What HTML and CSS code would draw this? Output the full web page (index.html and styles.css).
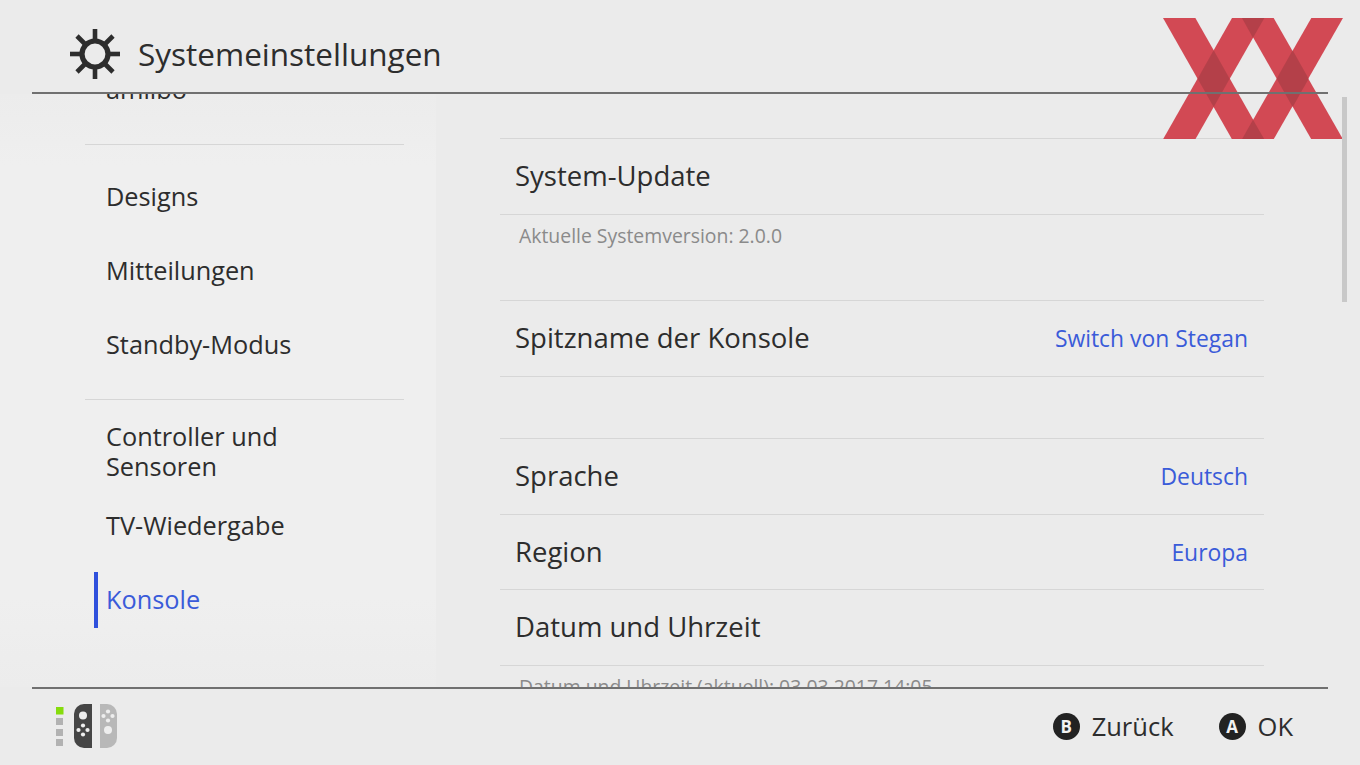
FILE: index.html
```html
<!DOCTYPE html>
<html lang="de">
<head>
    <meta charset="UTF-8">
    <title>Systemeinstellungen</title>
    <link rel="stylesheet" href="styles.css">
</head>
<body>
    <div class="app">
        <header class="top-bar">
            <svg class="gear" viewBox="0 0 50 50" width="50" height="50">
                <circle cx="25" cy="25" r="13" fill="none" stroke="#2d2d2d" stroke-width="5.200"/>
                <g stroke="#2d2d2d" stroke-width="4.600">
                    <line x1="25" y1="0" x2="25" y2="12"/>
                    <line x1="25" y1="38" x2="25" y2="50"/>
                    <line x1="0" y1="25" x2="12" y2="25"/>
                    <line x1="38" y1="25" x2="50" y2="25"/>
                    <line x1="7" y1="7" x2="16" y2="16"/>
                    <line x1="34" y1="34" x2="43" y2="43"/>
                    <line x1="43" y1="7" x2="34" y2="16"/>
                    <line x1="16" y1="34" x2="7" y2="43"/>
                </g>
            </svg>
            <h1>Systemeinstellungen</h1>
        </header>

        <main class="content">
            <nav class="sidebar">
                <ul class="nav-group nav-first">
                    <li>amiibo</li>
                </ul>
                <ul class="nav-group">
                    <li>Designs</li>
                    <li>Mitteilungen</li>
                    <li>Standby-Modus</li>
                </ul>
                <ul class="nav-group">
                    <li>Controller und<br>Sensoren</li>
                    <li>TV-Wiedergabe</li>
                    <li class="active">Konsole</li>
                </ul>
            </nav>

            <section class="settings">
                <div class="setting-group">
                    <div class="row"><span>System-Update</span></div>
                    <p class="note">Aktuelle Systemversion: 2.0.0</p>
                </div>
                <div class="setting-group">
                    <div class="row"><span>Spitzname der Konsole</span><span class="value">Switch von Stegan</span></div>
                </div>
                <div class="setting-group spaced">
                    <div class="row"><span>Sprache</span><span class="value">Deutsch</span></div>
                    <div class="row short"><span>Region</span><span class="value">Europa</span></div>
                    <div class="row"><span>Datum und Uhrzeit</span></div>
                    <p class="note">Datum und Uhrzeit (aktuell): 03.03.2017 14:05</p>
                </div>
            </section>
        </main>

        <footer class="bottom-bar">
            <svg class="joycons" viewBox="0 0 62 44" width="62" height="44">
                <rect x="0" y="3" width="7.500" height="7.500" fill="#86dc0c"/>
                <rect x="0" y="14" width="7" height="7" fill="#b2b2b2"/>
                <rect x="0" y="25" width="7" height="7" fill="#b2b2b2"/>
                <rect x="0" y="35" width="7" height="7" fill="#b2b2b2"/>
                <path d="M36 0H28A10 10 0 0 0 18 10V34A10 10 0 0 0 28 44H36Z" fill="#454545"/>
                <circle cx="27" cy="11.500" r="4" fill="#eee"/>
                <g fill="#eee">
                    <circle cx="27" cy="21.500" r="2.100"/>
                    <circle cx="27" cy="30.500" r="2.100"/>
                    <circle cx="22.500" cy="26" r="2.100"/>
                    <circle cx="31.500" cy="26" r="2.100"/>
                </g>
                <path d="M44 0H51A10 10 0 0 1 61 10V34A10 10 0 0 1 51 44H44Z" fill="#b8b8b8"/>
                <g fill="#eee">
                    <circle cx="52" cy="7.500" r="2.100"/>
                    <circle cx="52" cy="16.500" r="2.100"/>
                    <circle cx="47.500" cy="12" r="2.100"/>
                    <circle cx="56.500" cy="12" r="2.100"/>
                </g>
                <circle cx="52" cy="26" r="4" fill="#eee"/>
            </svg>
            <div class="hints">
                <div class="hint"><span class="btn">B</span>Zurück</div>
                <div class="hint"><span class="btn">A</span>OK</div>
            </div>
        </footer>

        <svg class="xx-mark" viewBox="68 54 540 364" width="180" height="121.300">
            <g class="xx-strands">
                <polygon points="68,54 165,54 372,418 275,418"/>
                <polygon points="68,418 165,418 372,54 275,54"/>
                <polygon points="305,54 400,54 608,418 513,418"/>
                <polygon points="305,418 400,418 608,54 513,54"/>
            </g>
            <g class="xx-overlap">
                <polygon points="220,151 268,236 220,321 172,236"/>
                <polygon points="457,151 505,236 457,321 409,236"/>
                <polygon points="305,54 372,54 338,113"/>
                <polygon points="305,418 372,418 338,359"/>
            </g>
        </svg>

        <div class="scrollbar"></div>
    </div>
</body>
</html>
```

FILE: styles.css
```css
body {
    margin: 0;
    background-color: #ebebeb;
    color: #2d2d2d;
    font-family: "Open Sans", "Noto Sans", sans-serif;
}
.app {
    position: relative;
    display: flex;
    flex-direction: column;
    height: 765px;
    overflow: hidden;
}
.top-bar {
    position: relative;
    z-index: 1;
    display: flex;
    align-items: center;
    gap: 18px;
    box-sizing: border-box;
    height: 94px;
    margin: 0 32px;
    padding: 16px 0 0 38px;
    border-bottom: 2px solid #707070;
}
.gear {
    flex: none;
}
h1 {
    margin: -2px 0 0;
    font-size: 31.500px;
    font-weight: 400;
}
.content {
    display: flex;
    height: 593px;
    overflow: hidden;
}
.sidebar {
    box-sizing: border-box;
    width: 436px;
    padding-left: 85px;
    background: linear-gradient(#ececec, #efefef 12%, #efefef 85%, #ececec);
}
.nav-group {
    width: 319px;
    margin: 0 0 15px;
    padding: 0 0 17px;
    list-style: none;
    border-bottom: 1px solid #d6d6d6;
}
.nav-first {
    margin-top: -41px;
}
.nav-group:last-child {
    border-bottom: none;
}
.nav-group li {
    display: flex;
    align-items: center;
    box-sizing: border-box;
    height: 74px;
    padding: 0 0 2px 21px;
    font-size: 25.300px;
    line-height: 30px;
}
.nav-group li.active {
    position: relative;
    color: #3a5bd9;
}
.nav-group li.active::before {
    content: "";
    position: absolute;
    left: 9px;
    top: 9px;
    width: 4px;
    height: 56px;
    background: #2f50dc;
}
.settings {
    width: 764px;
    margin-left: 64px;
    padding-top: 44px;
}
.setting-group {
    border-top: 1px solid #d6d6d6;
}
.setting-group.spaced {
    margin-top: 61px;
}
.row {
    display: flex;
    align-items: center;
    justify-content: space-between;
    box-sizing: border-box;
    height: 76px;
    padding: 0 16px 2px 15px;
    border-bottom: 1px solid #d6d6d6;
    font-size: 27.500px;
}
.row.short {
    height: 75px;
}
.value {
    padding-top: 2px;
    color: #3a5bd9;
    font-size: 22.900px;
}
.note {
    box-sizing: border-box;
    height: 85px;
    margin: 0;
    padding: 8px 0 0 19px;
    color: #8a8a8a;
    font-size: 19.400px;
    line-height: 26px;
}
.bottom-bar {
    display: flex;
    align-items: center;
    justify-content: space-between;
    box-sizing: border-box;
    height: 78px;
    margin: 0 32px;
    padding: 0 35px 2px 24px;
    border-top: 2px solid #707070;
}
.joycons {
    flex: none;
}
.hints {
    display: flex;
    gap: 45px;
}
.hint {
    display: flex;
    align-items: center;
    gap: 12px;
    font-size: 25.500px;
}
.btn {
    display: flex;
    align-items: center;
    justify-content: center;
    width: 27px;
    height: 27px;
    border-radius: 50%;
    background: #222;
    color: #f2f2f2;
    font-size: 17px;
    font-weight: 700;
}
.xx-mark {
    position: absolute;
    left: 1162.700px;
    top: 18px;
}
.xx-strands {
    fill: #cf3340;
    opacity: 0.88;
}
.xx-overlap {
    fill: rgba(90, 40, 40, 0.25);
}
.scrollbar {
    position: absolute;
    left: 1342px;
    top: 97px;
    width: 5px;
    height: 205px;
    background: #c8c8c8;
}
```
